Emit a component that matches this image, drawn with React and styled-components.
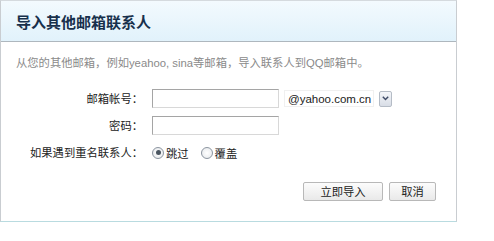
import styled, { createGlobalStyle } from "styled-components";

const GlobalStyle = createGlobalStyle`
  body {
    margin: 0;
    background: #ffffff;
    font-family: "Liberation Sans", "Noto Sans CJK SC", sans-serif;
    font-size: 11.3px;
  }
`;

const Panel = styled.div`
  box-sizing: border-box;
  width: 457px;
  height: 222px;
  border: 1px solid #c9cdd1;
  border-bottom-color: #b9dbe0;
  border-top-color: #d5dade;
  display: flex;
  flex-direction: column;
`;

const Header = styled.div`
  box-sizing: border-box;
  height: 41px;
  padding-left: 15px;
  display: flex;
  align-items: center;
  background: linear-gradient(#f3fafe, #e1f2fb);
  border-bottom: 1px solid #aeb7be;
`;

const Title = styled.h1`
  margin: 0;
  font-family: "Noto Sans CJK SC", sans-serif;
  font-size: 15px;
  font-weight: 700;
  color: #17304c;
  padding-top: 1px;
`;

const Body = styled.div`
  padding: 12px 20px 0 15px;
  display: flex;
  flex-direction: column;
`;

const Desc = styled.p`
  margin: 0;
  color: #8a8a8a;
  line-height: 18px;
  font-size: 11.3px;
`;

const Form = styled.div`
  margin-top: 17px;
  display: grid;
  grid-template-columns: 127px auto;
  column-gap: 9px;
  row-gap: 8px;
  align-items: center;
`;

const Label = styled.label`
  text-align: right;
  color: #222;
  font-family: "Noto Sans CJK SC", sans-serif;
  font-size: 11.3px;
  line-height: 19px;
`;

const Field = styled.div`
  display: flex;
  align-items: center;
  gap: ${(p) => p.$gap || 6}px;
`;

const Input = styled.input`
  box-sizing: border-box;
  width: 127px;
  height: 19px;
  margin: 0;
  border: 1px solid #a5a5a5;
  border-right-color: #d8d8d8;
  border-bottom-color: #d8d8d8;
  background: #fff;
`;

const Domain = styled.span`
  box-sizing: border-box;
  height: 17px;
  padding: 0 2px 0 3px;
  display: flex;
  align-items: center;
  border: 1px solid #f0f0f0;
  color: #222;
  font-size: 11.5px;
`;

const DropBtn = styled.span`
  box-sizing: border-box;
  width: 13px;
  height: 16px;
  border: 1px solid #b5bcc6;
  border-radius: 2px;
  background: linear-gradient(#f4f6fa, #d8dde6);
  display: flex;
  align-items: center;
  justify-content: center;
`;

const Radio = styled.span`
  box-sizing: border-box;
  width: 12px;
  height: 12px;
  border-radius: 50%;
  border: 1px solid #8c95a0;
  background: radial-gradient(#ffffff, #e4e7ea);
  display: flex;
  align-items: center;
  justify-content: center;
  &::after {
    content: "";
    display: ${(p) => (p.$checked ? "block" : "none")};
    width: 5px;
    height: 5px;
    border-radius: 50%;
    background: #4a5560;
  }
`;

const Option = styled.span`
  display: flex;
  align-items: center;
  gap: 2px;
  margin-right: 6px;
  color: #222;
  font-family: "Noto Sans CJK SC", sans-serif;
`;

const Actions = styled.div`
  margin-top: 20px;
  display: flex;
  justify-content: flex-end;
  gap: 6px;
`;

const Button = styled.button`
  box-sizing: border-box;
  width: ${(p) => p.$w}px;
  height: 19px;
  margin: 0;
  padding: 0;
  border: 1px solid #b8b8b8;
  border-radius: 2px;
  background: linear-gradient(#fcfcfc, #e9e9e9);
  color: #222;
  font-family: "Noto Sans CJK SC", sans-serif;
  font-size: 11.3px;
  line-height: 17px;
`;

export default function App() {
  return (
    <>
      <GlobalStyle />
      <Panel>
        <Header>
          <Title>导入其他邮箱联系人</Title>
        </Header>
        <Body>
          <Desc>从您的其他邮箱，例如yeahoo, sina等邮箱，导入联系人到QQ邮箱中。</Desc>
          <Form>
            <Label>邮箱帐号：</Label>
            <Field $gap={5}>
              <Input />
              <Domain>@yahoo.com.cn</Domain>
              <DropBtn>
                <svg width="7" height="5" viewBox="0 0 7 5">
                  <path d="M0.8 0.8 L3.5 3.6 L6.2 0.8" fill="none" stroke="#3d4a66" strokeWidth="1.4" />
                </svg>
              </DropBtn>
            </Field>
            <Label>密码：</Label>
            <Field>
              <Input type="password" />
            </Field>
            <Label>如果遇到重名联系人：</Label>
            <Field $gap={0}>
              <Option>
                <Radio $checked />
                跳过
              </Option>
              <Option>
                <Radio />
                覆盖
              </Option>
            </Field>
          </Form>
          <Actions>
            <Button $w={80}>立即导入</Button>
            <Button $w={47}>取消</Button>
          </Actions>
        </Body>
      </Panel>
    </>
  );
}
